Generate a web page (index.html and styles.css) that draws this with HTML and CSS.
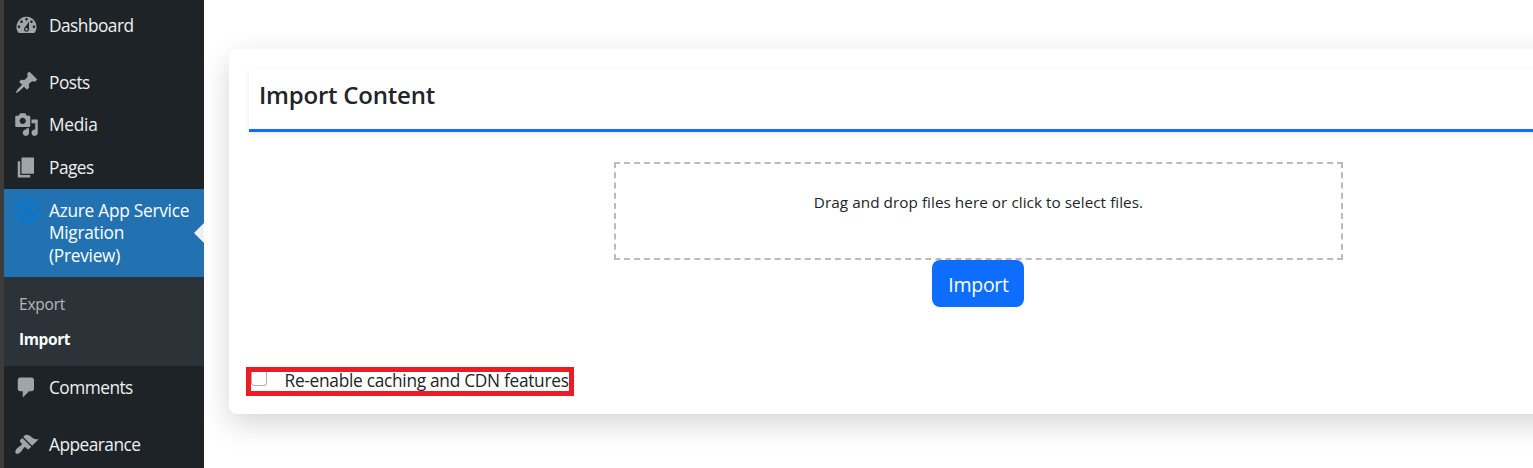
FILE: index.html
```
<!DOCTYPE html>
<html lang="en">
<head>
<meta charset="utf-8">
<title>Import Content</title>
<link rel="stylesheet" href="styles.css">
</head>
<body>
<div class="app">
  <nav class="sidebar">
    <a class="item dashboard"><svg class="icon" viewBox="0 0 20 20"><path d="M3.76 16h12.48A7.998 7.998 0 0 0 10 3a7.998 7.998 0 0 0-6.24 13zM10 4c.55 0 1 .45 1 1s-.45 1-1 1-1-.45-1-1 .45-1 1-1zM6 6c.55 0 1 .45 1 1s-.45 1-1 1-1-.45-1-1 .45-1 1-1zm8 0c.55 0 1 .45 1 1s-.45 1-1 1-1-.45-1-1 .45-1 1-1zm-5.37 5.55L12 7v6c0 1.1-.9 2-2 2s-2-.9-2-2c0-.57.24-1.08.63-1.45zM4 10c.55 0 1 .45 1 1s-.45 1-1 1-1-.45-1-1 .45-1 1-1zm12 0c.55 0 1 .45 1 1s-.45 1-1 1-1-.45-1-1 .45-1 1-1zm-5 3c0-.55-.45-1-1-1s-1 .45-1 1 .45 1 1 1 1-.45 1-1z"/></svg><span>Dashboard</span></a>
    <a class="item"><svg class="icon" viewBox="0 0 20 20"><path d="M10.44 3.02l1.82-1.82 6.36 6.35-1.83 1.82c-1.05-.68-2.48-.57-3.41.36l-.75.75c-.92.93-1.04 2.35-.35 3.41l-1.83 1.82-2.41-2.41-2.8 2.79c-.42.42-3.38 2.71-3.8 2.29s1.86-3.39 2.28-3.81l2.79-2.79L4.1 9.36l1.83-1.82c1.05.69 2.48.57 3.4-.36l.75-.75c.93-.92 1.05-2.35.36-3.41z"/></svg><span>Posts</span></a>
    <a class="item media"><svg class="icon" viewBox="0 0 20 20"><path d="M13 11V4c0-.55-.45-1-1-1h-1.67L9 1H5L3.67 3H2c-.55 0-1 .45-1 1v7c0 .55.45 1 1 1h10c.55 0 1-.45 1-1zM7 4.5c1.38 0 2.5 1.12 2.5 2.5S8.38 9.5 7 9.5 4.5 8.38 4.5 7 5.62 4.5 7 4.5zM14 6h5v10.5c0 1.38-1.12 2.5-2.5 2.5S14 17.88 14 16.5s1.12-2.5 2.5-2.5c.17 0 .34.02.5.05V9h-3V6zm-4 8.05V13h2v3.5c0 1.38-1.12 2.5-2.5 2.5S7 17.88 7 16.5 8.12 14 9.5 14c.17 0 .34.02.5.05z"/></svg><span>Media</span></a>
    <a class="item"><svg class="icon" viewBox="0 0 20 20"><path d="M6 15V2h10v13H6zm-1 1h8v2H3V5h2v11z"/></svg><span>Pages</span></a>
    <a class="item current"><svg class="icon azure" viewBox="0 0 25 25"><circle class="ring" cx="12.5" cy="12.5" r="11.3"/><path d="M10.500 2 7 7.500Q5.500 12 8.500 18L12.500 23M7.500 7.500l5.500 5.500 6.500 3M8.500 18l4.500-5 4.500-6.500M2 11.500l5-4M8.500 18Q15 20.500 19.500 16M7.500 7Q12 4 17.500 6.500l5 4"/><g class="nodes"><circle cx="7.500" cy="7.300" r="1.900"/><circle cx="13" cy="13" r="2.600"/><circle cx="8.500" cy="18" r="1.700"/><circle cx="17.500" cy="6.500" r="1.500"/><circle cx="19.500" cy="16" r="1.600"/></g></svg><span>Azure App Service<br>Migration<br>(Preview)</span></a>
    <div class="submenu"><a>Export</a><a class="selected">Import</a></div>
    <a class="item"><svg class="icon" viewBox="0 0 20 20"><path d="M5 2h9c1.100 0 2 .9 2 2v7c0 1.100-.9 2-2 2h-2l-5 5v-5H5c-1.100 0-2-.9-2-2V4c0-1.100.9-2 2-2z"/></svg><span>Comments</span></a>
    <a class="item appearance"><svg class="icon" viewBox="0 0 20 20"><path d="M14.48 11.06L7.41 3.99l1.5-1.5c.5-.56 2.3-.47 3.51.32 1.21.8 1.43 1.28 2.91 2.1 1.18.64 2.45 1.26 4.45.85zm-.71.71L6.7 4.7 4.93 6.47c-.39.39-.39 1.02 0 1.41l1.06 1.06c.39.39.39 1.03 0 1.42-.6.6-1.43 1.11-2.21 1.69-.35.26-.7.53-1.01.84C1.43 14.23.4 16.08 1.4 17.07c.99 1 2.84-.03 4.18-1.36.31-.31.58-.66.85-1.02.57-.78 1.08-1.61 1.69-2.21.39-.39 1.02-.39 1.41 0l1.06 1.06c.39.39 1.02.39 1.41 0z"/></svg><span>Appearance</span></a>
  </nav>
  <main class="main">
    <section class="card">
      <h1 class="title"><span>Import Content</span></h1>
      <div class="dropzone"><span>Drag and drop files here or click to select files.</span></div>
      <button class="import">Import</button>
      <label class="option"><span class="check"></span><span class="label">Re-enable caching and CDN features</span></label>
    </section>
  </main>
</div>
</body>
</html>
```
FILE: styles.css
```
* { box-sizing: border-box; }
body { margin: 0; background: #fff; color: #212529; font-family: "Open Sans", "Noto Sans", sans-serif; }
.app { display: flex; width: 100%; height: 468px; overflow: hidden; }
.sidebar { flex: none; width: 204px; height: 468px; overflow: hidden; padding-top: 4px; background: #1d2327; border-left: 4px solid #3c3c3c; color: #f0f0f1; }
.item { display: flex; height: 42.6px; padding: 10.6px 0 0 10px; gap: 10px; font-size: 17.3px; line-height: 22.75px; letter-spacing: -0.52px; white-space: nowrap; }
.icon { flex: none; width: 25px; height: 25px; margin-top: -1.6px; fill: #a0a5aa; }
.dashboard { margin-bottom: 14.6px; }
.media { padding-top: 10px; letter-spacing: -0.25px; }
.current { position: relative; height: 88px; background: #2271b1; color: #fff; letter-spacing: -0.27px; }
.current::after { content: ""; position: absolute; right: 0; top: 34px; border: 10px solid transparent; border-right-color: #f0f0f1; border-left-width: 0; }
.azure { fill: none; stroke: #0078d7; stroke-width: 1; }
.azure .ring { stroke-width: 1.8; }
.azure .nodes { fill: #0078d7; stroke: none; }
.submenu { display: flex; flex-direction: column; height: 89px; padding: 10px 0 0 15px; background: #2c3338; color: #b4b9be; font-size: 15.5px; letter-spacing: -0.2px; line-height: 35px; }
.selected { color: #fff; font-weight: 700; letter-spacing: -0.4px; }
.appearance { margin-top: 14.5px; }
.main { flex: 1; min-width: 0; padding: 49px 0 0 25px; overflow: hidden; }
.card { display: flex; flex-direction: column; align-items: center; width: 1499px; height: 365px; padding: 20px; border-radius: 8px; background: #fff; box-shadow: 0 10px 30px rgba(0,0,0,.165); }
.title { flex: none; width: 100%; height: 63px; margin: 0; padding: 8px 10px; border-bottom: 3px solid #0d6efd; box-shadow: 0 2px 5px rgba(0,0,0,.09); font-size: 24px; line-height: 36px; font-weight: 600; letter-spacing: -0.22px; }
.dropzone { flex: none; width: 729px; height: 98px; margin-top: 30px; padding-top: 26px; border: 2px dashed #bbb; text-align: center; font-size: 15.3px; line-height: 24px; letter-spacing: 0.04px; }
.import { flex: none; width: 92px; height: 47px; margin-right: 1px; padding: 2px 0 0 1px; border: 0; border-radius: 8px; background: #0d6efd; color: #fff; font: 19.5px/45px "Open Sans", "Noto Sans", sans-serif; letter-spacing: -0.3px; }
.option { flex: none; align-self: flex-start; display: flex; width: 328px; height: 29px; margin: 60px 0 0 -3px; border: 5px solid #ed1c24; white-space: nowrap; }
.check { flex: none; width: 16px; height: 14px; border: 1px solid #adadad; border-top: 0; border-radius: 0 0 4px 4px; }
.label { margin-left: 17.5px; font-size: 17.3px; line-height: 18px; letter-spacing: -0.28px; }
```
